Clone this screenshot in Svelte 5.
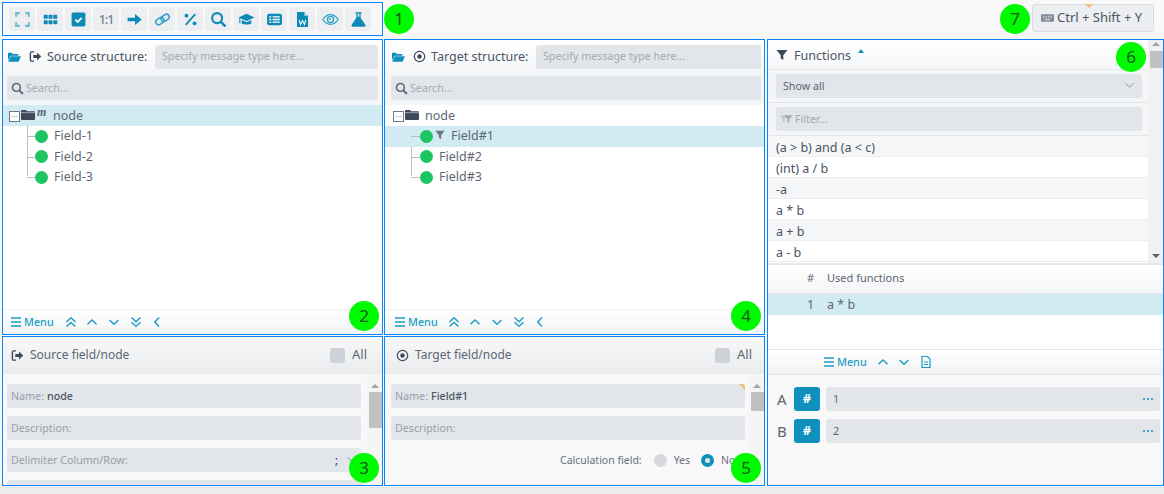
<script>
  const tools = [
    { s: '<path d="M2 5.5V2h3.5M10.5 2H14v3.5M14 10.5V14h-3.5M5.5 14H2v-3.5" fill="none" stroke="#6fbcd8" stroke-width="1.9"/>' },
    { s: '<g fill="#0a8ab5"><rect x="1.6" y="3.6" width="3.8" height="3.8" rx=".8"/><rect x="6.1" y="3.6" width="3.8" height="3.8" rx=".8"/><rect x="10.6" y="3.6" width="3.8" height="3.8" rx=".8"/><rect x="1.6" y="8.6" width="3.8" height="3.8" rx=".8"/><rect x="6.1" y="8.6" width="3.8" height="3.8" rx=".8"/><rect x="10.6" y="8.6" width="3.8" height="3.8" rx=".8"/></g>' },
    { s: '<rect x="1.5" y="1.5" width="13" height="13" rx="1.6" fill="#0a8ab5"/><path d="M5 8.2l2.2 2.1L11 6.4" fill="none" stroke="#fff" stroke-width="1.6"/>' },
    { t: '1:1' },
    { s: '<path d="M1.5 6.3h7V2.8L14.8 8l-6.3 5.2V9.7h-7z" fill="#0a8ab5"/>' },
    { s: '<g fill="none" stroke="#2b9fc7" stroke-width="1.4" transform="rotate(-32 8 8)"><rect x="1" y="5.4" width="8.2" height="5.2" rx="2.6"/><rect x="6.8" y="5.4" width="8.2" height="5.2" rx="2.6"/></g>' },
    { s: '<path d="M3.5 13L12.5 3" stroke="#0a8ab5" stroke-width="1.7"/><circle cx="4.2" cy="4.4" r="1.8" fill="#0a8ab5"/><circle cx="11.8" cy="11.6" r="1.8" fill="#0a8ab5"/>' },
    { s: '<circle cx="6.7" cy="6.7" r="4.7" fill="none" stroke="#0a8ab5" stroke-width="2"/><path d="M10.2 10.2l4.3 4.3" stroke="#0a8ab5" stroke-width="2.4"/>' },
    { s: '<path d="M8 2.5L.5 6 8 9.5 15.5 6z" fill="#0a8ab5"/><path d="M3.5 8.5v3.2c1.3 1.2 7.7 1.2 9 0V8.5L8 10.7z" fill="#0a8ab5"/><path d="M1.7 6.5v5" stroke="#0a8ab5"/>' },
    { s: '<rect x="1" y="2.5" width="14" height="11" rx="2" fill="#0a8ab5"/><path d="M3 5.5h2M3 8h2M3 10.5h2M6.2 5.5H13M6.2 8H13M6.2 10.5H13" stroke="#fff" stroke-width="1.2"/>' },
    { s: '<path d="M2.8 1h7l3.4 3.4V15H2.8z" fill="#0a8ab5"/><path d="M9.8 1v3.4h3.4" fill="#cfe8f1"/><path d="M5 8.4l1.1 4.3L8 9l1.9 3.7L11 8.4" fill="none" stroke="#fff" stroke-width="1"/>' },
    { s: '<path d="M.8 8C3 4.6 5.4 3.4 8 3.4s5 1.2 7.2 4.6C13 11.4 10.6 12.6 8 12.6S3 11.4.8 8z" fill="none" stroke="#2b9fc7" stroke-width="1.2"/><circle cx="8" cy="8" r="2.9" fill="none" stroke="#2b9fc7" stroke-width="1.3"/><circle cx="7.4" cy="7.6" r=".9" fill="#2b9fc7"/>' },
    { s: '<path d="M5.2 1.2h5.6v1.2h-.8v4l4.4 6.6c.6 1-.1 1.9-1 1.9H2.6c-.9 0-1.6-.9-1-1.9L6 6.4v-4h-.8z" fill="#0a8ab5"/><path d="M7.2 2.4h1.6v3H7.2z" fill="#e6eef2"/>' }
  ];
  const sfn = ['(a > b) and (a < c)', '(int) a / b', '-a', 'a * b', 'a + b', 'a - b'];
  const badges = [
    [1, 399, 19], [2, 364, 316], [3, 364, 468], [4, 746, 316], [5, 746, 468], [6, 1131, 57], [7, 1015, 19]
  ];
</script>

{#snippet chev(d)}
  <svg class="nav" viewBox="0 0 14 14"><path {d} fill="none" stroke="#1b9cc6" stroke-width="1.4"/></svg>
{/snippet}
{#snippet bars()}
  <svg class="bars" viewBox="0 0 10 10"><path d="M0 1h10M0 5h10M0 9h10" stroke="#1b9cc6" stroke-width="1.4"/></svg>
{/snippet}
{#snippet footer()}
  <div class="foot">
    {@render bars()}<span class="menu">Menu</span>
    <span class="navs">
      {@render chev('M2.5 7L7 2.8 11.5 7M2.5 11.6L7 7.4l4.5 4.2')}
      {@render chev('M2.5 9.2L7 5l4.5 4.2')}
      {@render chev('M2.5 5L7 9.2 11.5 5')}
      {@render chev('M2.5 2.6L7 6.8l4.5-4.2M2.5 7.2L7 11.4l4.5-4.2')}
      {@render chev('M9 2.6L4.8 7 9 11.4')}
    </span>
  </div>
{/snippet}
{#snippet folderOpen()}
  <svg class="fo" viewBox="0 0 16 14"><path d="M1 2h4.5l1.3 1.4H13v2H4L1 11z" fill="#0f8fbc"/><path d="M4.2 6H16l-2.6 6.5H1.2z" fill="#0f8fbc"/></svg>
{/snippet}
{#snippet signOut()}
  <svg class="hic" viewBox="0 0 14 14"><path d="M5.5 2H2.8C2 2 1.5 2.5 1.5 3.3v7.4c0 .8.5 1.3 1.3 1.3h2.7" fill="none" stroke="#3e4859" stroke-width="1.5"/><path d="M4.6 5.5h4V2.8L13.2 7l-4.6 4.2V8.5h-4z" fill="#3e4859"/></svg>
{/snippet}
{#snippet target()}
  <svg class="hic" viewBox="0 0 14 14"><circle cx="7" cy="7" r="5.6" fill="none" stroke="#3e4859" stroke-width="1.3"/><circle cx="7" cy="7" r="2.4" fill="#3e4859"/></svg>
{/snippet}
{#snippet search()}
  <svg class="sic" viewBox="0 0 14 14"><circle cx="5.8" cy="5.8" r="4.2" fill="none" stroke="#5e6b7c" stroke-width="1.7"/><path d="M8.9 8.9l4 4" stroke="#5e6b7c" stroke-width="2"/></svg>
{/snippet}
{#snippet folder()}
  <svg class="folder" viewBox="0 0 14 12"><path d="M0 2.2C0 1.4.5 1 1.2 1h3.6l1.3 1.3h6.7c.7 0 1.2.5 1.2 1.2v6.4c0 .7-.5 1.1-1.2 1.1H1.2C.5 11 0 10.6 0 9.9z" fill="#3e4859"/><path d="M0 3.7h14" stroke="#fff" stroke-width=".5"/></svg>
{/snippet}
{#snippet funnel(c, cls)}
  <svg class={cls} viewBox="0 0 12 12"><path d="M.5 1h11L7.3 6.2V11L4.7 9.4V6.2z" fill={c}/></svg>
{/snippet}

{#snippet tree(names, src)}
  <div class="tree">
    <div class="row root" class:sel={src}>
      <span class="exp"><i></i></span>
      {@render folder()}
      {#if src}<em class="m">m</em>{/if}
      <span class="nodelabel">node</span>
    </div>
    <div class="kids">
      {#each names as n, i}
        <div class="row kid" class:sel={!src && i === 0}>
          <span class="dot"></span>
          {#if !src && i === 0}{@render funnel('#6a7583', 'kf')}{/if}
          <span class="fld">{n}</span>
        </div>
      {/each}
    </div>
  </div>
{/snippet}

{#snippet structure(label, names, src)}
  <section class="panel struct" class:tgt={!src}>
    <div class="shead">
      {@render folderOpen()}
      {#if src}{@render signOut()}{:else}{@render target()}{/if}
      <span class="stitle">{label}</span>
      <div class="inp msg"><span class="ph">Specify message type here...</span></div>
    </div>
    <div class="srow">
      <div class="inp">{@render search()}<span class="ph">Search...</span></div>
    </div>
    {@render tree(names, src)}
    {@render footer()}
  </section>
{/snippet}

{#snippet scrollbar(h)}
  <div class="sb">
    <i class="up"></i>
    <i class="thumb" style="height:{h}px"></i>
  </div>
{/snippet}

<div class="page">
  <header class="top">
    <div class="tools">
      {#each tools as t}
        <div class="tb">
          {#if t.t}<span class="one">{t.t}</span>{:else}<svg viewBox="0 0 16 16" class="ti">{@html t.s}</svg>{/if}
        </div>
      {/each}
    </div>
    <div class="kbd">
      <i class="tri"></i>
      <svg viewBox="0 0 14 10" class="kb"><rect y="1" width="14" height="8" rx="1" fill="#7d8794"/><path d="M2 3.2h10M2 5h10" stroke="#e8eaed" stroke-dasharray="1 .8" stroke-width="1"/><path d="M4 7h6" stroke="#e8eaed"/></svg>
      <span>Ctrl + Shift + Y</span>
    </div>
  </header>

  <main class="grid">
    {@render structure('Source structure:', ['Field-1', 'Field-2', 'Field-3'], true)}
    {@render structure('Target structure:', ['Field#1', 'Field#2', 'Field#3'], false)}

    <section class="panel fn">
      <div class="fntop">
        <div class="fnmain">
          <div class="fhead">
            {@render funnel('#3e4859', 'ffn')}
            <span class="ftitle">Functions</span>
            <i class="sort"></i>
          </div>
          <div class="frow">
            <div class="inp select"><span class="val">Show all</span>
              <svg viewBox="0 0 12 8" class="dd"><path d="M1.5 1.5L6 6l4.5-4.5" fill="none" stroke="#7d8794" stroke-width="1"/></svg>
            </div>
          </div>
          <div class="frow">
            <div class="inp">
              <svg class="fsm" viewBox="0 0 14 10"><path d="M0 1h8L5 5v4L3 8V5z" fill="#c3c7cd"/><path d="M4 1h10l-4 4v4.4L8 8V5z" fill="#a3a9b2"/></svg>
              <span class="ph">Filter...</span>
            </div>
          </div>
          <div class="list">
            {#each sfn as f, i}
              <div class="li" class:alt={i % 2 === 0}>{f}</div>
            {/each}
          </div>
        </div>
        <div class="sb fsb">
          <i class="up"></i>
          <i class="thumb" style="height:17px"></i>
          <i class="down"></i>
        </div>
      </div>
      <div class="used">
        <div class="uhead"><span class="num">#</span><span>Used functions</span></div>
        <div class="urow"><span class="num">1</span><span>a * b</span></div>
      </div>
      <div class="ufoot">
        {@render bars()}<span class="menu">Menu</span>
        <span class="navs short">
          {@render chev('M2.5 9.2L7 5l4.5 4.2')}
          {@render chev('M2.5 5L7 9.2 11.5 5')}
          <svg class="nav" viewBox="0 0 14 14"><path d="M3 1.5h5.5L11 4v8.5H3z" fill="none" stroke="#1b9cc6" stroke-width="1.2"/><path d="M5 7h4M5 9.5h4" stroke="#1b9cc6"/></svg>
        </span>
      </div>
      <div class="args">
        {#each [['A', '1'], ['B', '2']] as a}
          <div class="arg">
            <span class="al">{a[0]}</span>
            <span class="hash">#</span>
            <div class="inp av"><span class="val">{a[1]}</span><span class="more"><i></i><i></i><i></i></span></div>
          </div>
        {/each}
      </div>
    </section>

    <section class="panel detail">
      <div class="dhead">
        {@render signOut()}<span class="dtitle">Source field/node</span>
        <span class="cb"></span><span class="all">All</span>
      </div>
      <div class="dbody">
        <div class="form">
          <div class="inp"><span class="ph2">Name:</span><span class="bv">node</span></div>
          <div class="inp"><span class="ph2">Description:</span></div>
          <div class="inp between"><span class="ph2">Delimiter Column/Row:</span><span class="semi">;</span>
            <svg viewBox="0 0 12 8" class="dd"><path d="M1.5 1.5L6 6l4.5-4.5" fill="none" stroke="#7d8794" stroke-width="1"/></svg>
          </div>
          <div class="inp"></div>
        </div>
        {@render scrollbar(36)}
      </div>
    </section>

    <section class="panel detail tgt">
      <div class="dhead">
        {@render target()}<span class="dtitle">Target field/node</span>
        <span class="cb"></span><span class="all">All</span>
      </div>
      <div class="dbody">
        <div class="form">
          <div class="inp flag"><span class="ph2">Name:</span><span class="bv">Field#1</span></div>
          <div class="inp"><span class="ph2">Description:</span></div>
          <div class="calc">
            <span>Calculation field:</span>
            <span class="rd"></span><span class="opt">Yes</span>
            <span class="rd on"></span><span class="opt">No</span>
          </div>
        </div>
        {@render scrollbar(19)}
      </div>
    </section>
  </main>
  <div class="band"></div>

  {#each badges as b}
    <span class="badge" style="left:{b[1] - 15}px;top:{b[2] - 15}px">{b[0]}</span>
  {/each}
</div>

<style>
  :global(body) { margin: 0; background: #f8f8f8; }
  .page {
    position: relative; width: 1164px; height: 494px; overflow: hidden; background: #f8f8f8;
    font: 12px/1.2 "Noto Sans", sans-serif; color: #4a5464; box-sizing: border-box;
    display: flex; flex-direction: column;
  }
  .page :global(*) { box-sizing: border-box; }
  i { display: block; }

  .top { height: 39px; flex: none; display: flex; justify-content: space-between; padding: 2px 10px 0 2px; }
  .tools { width: 381px; height: 34px; border: 1px solid #0a84ff; display: flex; gap: 2px; padding: 4px 0 0 6px; }
  .tb { width: 26px; height: 24px; background: #eceef0; border-radius: 3px; display: flex; align-items: center; justify-content: center; }
  .ti { width: 17px; height: 17px; }
  .one { font-size: 12.5px; letter-spacing: -1px; color: #6d8399; font-weight: 500; }
  .kbd {
    position: relative; width: 122px; height: 28px; margin-top: 2px; background: #eceef1; border: 1px solid #d9dce1; border-radius: 3px;
    display: flex; align-items: center; gap: 3px; padding-left: 8px; font-size: 13px; color: #4a5464;
  }
  .kb { width: 13px; height: 10px; }
  .tri { position: absolute; top: -1px; left: 52px; border: 4px solid transparent; border-top-color: #f5bc6c; border-bottom: 0; }

  .grid {
    flex: none; display: grid; grid-template-columns: 381px 381px 398px; grid-template-rows: 296px 150px; column-gap: 1px; row-gap: 1px;
    padding-left: 2px;
  }
  .band { flex: 1; margin-top: 1px; background: #edeeef; border-top: 1px solid #e4e5e7; }
  .panel { border: 1px solid #0a84ff; background: #fff; display: flex; flex-direction: column; min-width: 0; overflow: hidden; }
  .fn { grid-column: 3; grid-row: 1 / span 2; margin-left: 1px; background: #f8f8f8; }
  .detail { background: #f8f8f8; }

  .shead { height: 33px; flex: none; display: flex; align-items: center; padding: 0 4px; background: linear-gradient(#fff, #f4f5f7); }
  .tgt .shead { padding: 0 3px 0 6px; }
  .fo { width: 14px; height: 12px; margin-right: 8px; flex: none; }
  .hic { width: 13px; height: 13px; flex: none; margin-right: 5px; }
  .stitle { font-size: 12.5px; color: #4a5464; white-space: nowrap; width: 108px; }
  .tgt .stitle { width: 105px; }
  .inp { background: #e2e5e9; border-radius: 3px; height: 24px; display: flex; align-items: center; padding: 0 4px; font-size: 10.7px; color: #4a5464; white-space: nowrap; }
  .msg { flex: 1; padding-left: 7px; }
  .ph { color: #a5a9b2; }
  .ph2 { color: #9a9fa9; }
  .bv { color: #4a5464; font-weight: 500; margin-left: 3px; }
  .srow { height: 32px; flex: none; padding: 3px 4px 0; background: #f4f5f7; }
  .tgt .srow { padding: 3px 3px 0 6px; }
  .sic { width: 13px; height: 13px; margin-right: 2px; }

  .tree { flex: 1; }
  .row { display: flex; align-items: center; font-size: 12.5px; color: #5d6675; }
  .root { height: 21px; padding-left: 6px; }
  .tgt .root { padding-left: 8px; }
  .sel { background: #d2ebf3; }
  .exp { width: 11px; height: 11px; border: 1px solid #6f7887; background: #fff; margin-right: 1px; display: flex; align-items: center; justify-content: center; margin-top: 2px; }
  .exp i { width: 7px; height: 1px; background: #c9ced5; }
  .folder { width: 14px; height: 12px; margin-top: -2px; }
  .m { font: italic bold 12px/1 "Liberation Serif", serif; color: #5b6574; width: 10px; margin: -7px 0 0 2px; }
  .nodelabel { margin-left: 6px; }
  .kids { position: relative; }
  .kids::before { content: ""; position: absolute; left: 24px; top: 0; height: 50px; width: 1px; background: #b8bdc6; }
  .tgt .kids::before { left: 26px; }
  .kid { height: 20.5px; padding-left: 32px; position: relative; }
  .tgt .kid { padding-left: 35px; }
  .kid::before { content: ""; position: absolute; left: 24px; top: 10px; width: 8px; height: 1px; background: #b8bdc6; }
  .tgt .kid::before { left: 26px; width: 9px; }
  .dot { width: 13px; height: 13px; border-radius: 50%; background: #1cc462; flex: none; }
  .kf { width: 10px; height: 10px; margin: -3px 0 0 2px; }
  .fld { margin-left: 6px; margin-top: -1px; }
  .kf + .fld { margin-left: 6px; }

  .foot, .ufoot { height: 25px; flex: none; display: flex; align-items: center; padding-left: 8px; background: linear-gradient(#fff, #f1f3f5); border-top: 1px solid #eef0f2; }
  .tgt .foot { padding-left: 10px; }
  .bars { width: 10px; height: 10px; margin-right: 3px; }
  .menu { font-size: 10.8px; font-weight: 500; color: #1b9cc6; }
  .navs { display: flex; gap: 7.7px; margin-left: 10px; }
  .tgt .navs { margin-left: 9px; }
  .navs.short { margin-left: 9px; }
  .nav { width: 14px; height: 14px; }

  .dhead { height: 37px; flex: none; display: flex; align-items: center; padding: 0 15px 1px 8px; background: linear-gradient(#f8f8f8, #e9ebee); font-size: 12px; color: #5d6675; }
  .tgt .dhead { padding: 0 12px 1px 11px; }
  .dtitle { flex: 1; margin-left: 1px; }
  .cb { width: 15px; height: 15px; border-radius: 3px; background: #cdd1d8; margin-right: 7px; }
  .all { font-size: 13px; }
  .dbody { flex: 1; min-height: 0; display: flex; padding-top: 10px; position: relative; }
  .form { flex: 1; display: flex; flex-direction: column; gap: 8px; padding: 0 6px 0 4px; min-width: 0; overflow: hidden; }
  .tgt .form { padding: 0 4px 0 6px; }
  .form .inp { flex: none; }
  .between .ph2 { flex: 1; }
  .semi { margin-right: 8px; font-weight: 600; }
  .flag { position: relative; overflow: hidden; }
  .flag::after { content: ""; position: absolute; right: 0; top: 0; border: 3.5px solid #f5bc6c; border-left-color: transparent; border-bottom-color: transparent; }
  .calc { display: flex; align-items: center; color: #667080; font-size: 10.5px; padding-left: 169px; height: 24px; white-space: nowrap; flex: none; }
  .rd { width: 13px; height: 13px; border-radius: 50%; background: #d5d8dd; margin: 0 7px 0 12px; flex: none; }
  .rd.on { background: #dfe3e8; border: 4.5px solid #0f8fbc; margin-left: 11px; }

  .sb { width: 15px; flex: none; display: flex; flex-direction: column; align-items: flex-end; background: #f1f1f1; position: relative; }
  .detail .sb { margin-top: -10px; padding-top: 8px; background: #f5f5f5; }
  .up { border: 4px solid transparent; border-bottom: 4px solid #a3a3a3; border-top: 0; margin: 2px 3px 0 0; }
  .thumb { width: 13px; background: #c1c1c1; margin-top: 4px; }
  .down { position: absolute; bottom: 5px; right: 3px; border: 4px solid transparent; border-top: 4px solid #5f5f5f; border-bottom: 0; }

  .fntop { display: flex; height: 223px; flex: none; background: #fff; }
  .fnmain { flex: 1; min-width: 0; }
  .fsb { height: 223px; }
  .fsb .thumb { margin-top: 5px; }
  .fhead { height: 30px; display: flex; align-items: center; padding: 1px 0 0 8px; background: linear-gradient(#fff, #f5f6f8); border-bottom: 1px solid #e2e5e9; }
  .ffn { width: 12px; height: 12px; margin-right: 6px; }
  .ftitle { font-size: 12.5px; color: #4a5464; }
  .sort { border: 3.5px solid transparent; border-bottom: 4px solid #0f8fbc; border-top: 0; margin: -8px 0 0 7px; }
  .frow { height: 33px; padding: 4px 6px 0 8px; background: #f4f5f7; border-bottom: 1px solid #e2e5e9; }
  .select { justify-content: space-between; padding: 0 7px; }
  .val { color: #5a6473; }
  .dd { width: 11px; height: 7px; margin-top: -2px; flex: none; }
  .fsm { width: 13px; height: 10px; margin: 0 2px 0 0; flex: none; }
  .list { font-size: 12.5px; color: #4a5464; }
  .li { height: 21px; padding-left: 8px; line-height: 23px; border-bottom: 1px solid #eceef1; background: #fff; }
  .li.alt { background: #f5f6f8; }

  .used { height: 86px; flex: none; background: #fff; border-top: 2px solid #e6e8ec; color: #5d6675; }
  .uhead { height: 29px; padding-bottom: 2px; display: flex; align-items: center; background: linear-gradient(#fff, #f4f5f7); font-size: 11px; border-bottom: 1px solid #e6e8ec; }
  .num { width: 40px; padding-left: 39px; margin-right: 19px; flex: none; white-space: nowrap; }
  .urow { height: 21px; display: flex; align-items: center; background: #d2ebf3; font-size: 12.5px; }
  .ufoot { padding-left: 56px; border-top: 1px solid #e2e5e9; border-bottom: 1px solid #e2e5e9; height: 26px; }

  .args { padding: 12px 3px 0 9px; display: flex; flex-direction: column; gap: 8px; }
  .arg { display: flex; align-items: center; }
  .al { width: 17px; font-size: 15px; color: #5d6675; }
  .hash { width: 26px; height: 24px; border-radius: 3px; background: #0f8fbc; color: #fff; font-weight: 700; font-size: 13px; display: flex; align-items: center; justify-content: center; margin-right: 6px; }
  .av { flex: 1; justify-content: space-between; padding: 0 7px; }
  .more { display: flex; gap: 1.5px; }
  .more i { width: 2.4px; height: 2.4px; border-radius: 50%; background: #0f8fbc; }

  .badge { position: absolute; width: 30px; height: 30px; border-radius: 50%; background: #00fa00; color: #16561a; font-size: 17px; line-height: 30px; text-align: center; }
</style>
